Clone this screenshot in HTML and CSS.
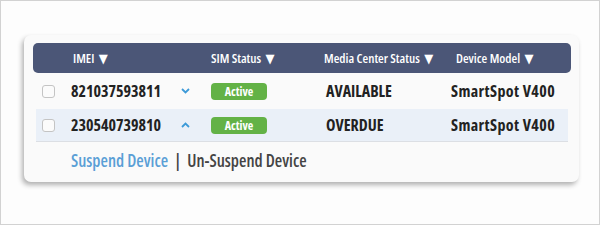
FILE: index.html
```html
<!DOCTYPE html>
<html>
<head>
<meta charset="utf-8">
<link rel="stylesheet" href="styles.css">
</head>
<body>
<div class="frame">
  <div class="card">
    <div class="grid head">
      <div class="c-imei">IMEI <span class="tri">▼</span></div>
      <div class="c-sim">SIM Status <span class="tri">▼</span></div>
      <div class="c-media">Media Center Status <span class="tri">▼</span></div>
      <div class="c-model">Device Model <span class="tri">▼</span></div>
    </div>
    <div class="grid row">
      <div class="c-cb"><span class="cb"></span></div>
      <div class="c-imei">821037593811</div>
      <div class="c-chev"><svg width="9" height="6" viewBox="0 0 9 6"><path d="M1 1 L4.5 4.5 L8 1" fill="none" stroke="#3d9ad8" stroke-width="1.8"/></svg></div>
      <div class="c-sim"><span class="badge">Active</span></div>
      <div class="c-media">AVAILABLE</div>
      <div class="c-model">SmartSpot V400</div>
    </div>
    <div class="grid row alt">
      <div class="c-cb"><span class="cb"></span></div>
      <div class="c-imei">230540739810</div>
      <div class="c-chev"><svg width="9" height="6" viewBox="0 0 9 6"><path d="M1 5 L4.5 1.5 L8 5" fill="none" stroke="#3d9ad8" stroke-width="1.8"/></svg></div>
      <div class="c-sim"><span class="badge">Active</span></div>
      <div class="c-media">OVERDUE</div>
      <div class="c-model">SmartSpot V400</div>
    </div>
    <div class="actions">
      <span class="link">Suspend Device</span>
      <span class="sep">|</span>
      <span class="plain">Un-Suspend Device</span>
    </div>
  </div>
</div>
</body>
</html>
```
FILE: styles.css
```css
html, body {
  margin: 0;
  padding: 0;
}
body {
  font-family: "Open Sans", "DejaVu Sans Condensed", sans-serif;
  font-stretch: 75%;
  font-weight: 700;
}
.frame {
  box-sizing: border-box;
  width: 600px;
  height: 225px;
  border: 1px solid #d2d2d2;
  background: #fdfdfd;
  padding: 34px 0 0 23px;
}
.card {
  box-sizing: border-box;
  width: 555px;
  height: 147px;
  background: #fafafa;
  border-radius: 7px;
  box-shadow: -2px 3px 5px rgba(0,0,0,0.3);
  padding: 8px 8px 0 9px;
}
.grid {
  display: grid;
  grid-template-columns: 38px 103px 37px 113px 128px 1fr;
  align-items: center;
}
.head {
  height: 30px;
  background: #4b5677;
  border-radius: 5px;
  color: #fff;
  font-size: 13px;
  font-weight: 600;
  white-space: nowrap;
}
.tri {
  font-size: 13px;
  margin-left: 2px;
}
.head .c-imei { grid-column: 2; padding-left: 2px; }
.head .c-sim { grid-column: 4; }
.head .c-media { grid-column: 5; }
.head .c-model { grid-column: 6; padding-left: 4px; }
.row {
  margin: 0 3px;
  color: #222;
  font-size: 16px;
}
.row .c-cb { padding-left: 6px; display: flex; }
.row .c-imei { margin-left: -3px; }
.row .c-chev { margin-left: 4px; display: flex; }
.row .c-sim { margin-left: -3px; display: flex; }
.row .c-media { margin-left: -1px; }
.row .c-model { margin-left: -4px; letter-spacing: 0.4px; }
.grid.row {
  height: 36px;
}
.grid.row.alt {
  height: 32px;
  background: #eaf0f8;
  border-bottom: 1px solid #dcdfe4;
}
.cb {
  box-sizing: border-box;
  width: 13px;
  height: 13px;
  border: 1px solid #c4c4c4;
  border-radius: 3px;
  background: #fbfbfb;
}
.badge {
  width: 56px;
  height: 17px;
  border-radius: 4px;
  background: #63b246;
  color: #fff;
  font-size: 12px;
  line-height: 17px;
  text-align: center;
}
.actions {
  padding: 7px 0 0 38px;
  font-size: 17px;
  font-weight: 600;
  color: #444;
}
.link { color: #5a9fd6; }
.sep { margin: 0 3px; }
```
